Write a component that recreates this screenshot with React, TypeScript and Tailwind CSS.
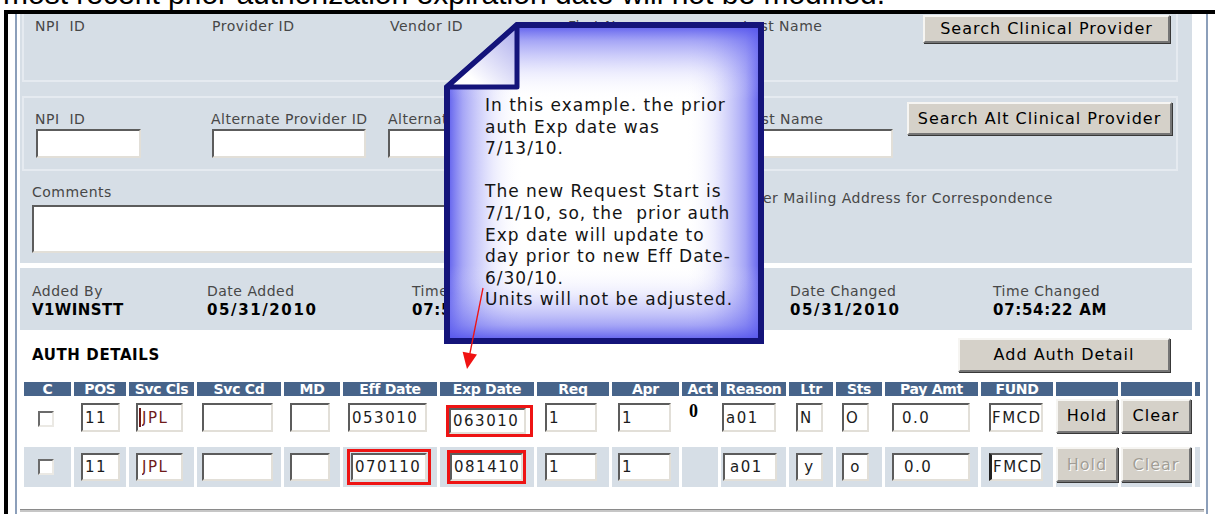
import type { ReactNode } from "react";

const sans = "font-['DejaVu_Sans',sans-serif]";
const labelText = `${sans} whitespace-pre text-[14px] leading-[17px] tracking-[0.5px] text-[#474747]`;
const sunken = "border-2 border-t-[#5c5c5c] border-l-[#5c5c5c] border-r-[#e2dfd8] border-b-[#e2dfd8] bg-white";
const raised = `${sans} border-2 border-t-[#f6f5f2] border-l-[#f6f5f2] border-r-[#757575] border-b-[#757575] bg-[#d5d1c9] text-[16px] tracking-[1px] shadow-[1px_1px_0_#383838]`;
const panelBg = "bg-[#d6dee6]";

const providerLabels = [
  { text: "NPI  ID", w: "w-[177px]" },
  { text: "Provider ID", w: "w-[178px]" },
  { text: "Vendor ID", w: "w-[178px]" },
  { text: "First Name", w: "w-[175px]" },
  { text: "Last Name", w: "w-[120px]" },
];

const altFields = [
  { text: "NPI  ID", w: "w-[176px]", input: "ml-px w-[105px]" },
  { text: "Alternate Provider ID", w: "w-[177px]", input: "ml-px w-[154px]" },
  { text: "Alternate Vendor ID", w: "w-[179px]", input: "w-[154px]" },
  { text: "Alt First Name", w: "w-[177px]", input: "w-[154px]" },
  { text: "Last Name", w: "w-[150px]", input: "ml-[3px] w-[146px]" },
];

const audit = [
  { label: "Added By", value: "V1WINSTT", w: "w-[175px]", track: "tracking-[0.4px]" },
  { label: "Date Added", value: "05/31/2010", w: "w-[205px]", track: "tracking-[1.6px]" },
  { label: "Time Added", value: "07:54:22 AM", w: "w-[188px]", track: "tracking-[0.7px]" },
  { label: "Changed By", value: "V1WINSTT", w: "w-[190px]", track: "tracking-[0.4px]" },
  { label: "Date Changed", value: "05/31/2010", w: "w-[203px]", track: "tracking-[1.6px]" },
  { label: "Time Changed", value: "07:54:22 AM", w: "w-[180px]", track: "tracking-[0.7px]" },
];

const columns = [
  { title: "C", w: "w-[47px]" },
  { title: "POS", w: "w-[52px]" },
  { title: "Svc Cls", w: "w-[65px]" },
  { title: "Svc Cd", w: "w-[84px]" },
  { title: "MD", w: "w-[56px]" },
  { title: "Eff Date", w: "w-[94px]" },
  { title: "Exp Date", w: "w-[94px]" },
  { title: "Req", w: "w-[72px]" },
  { title: "Apr", w: "w-[67px]" },
  { title: "Act", w: "w-[36px]" },
  { title: "Reason", w: "w-[65px]" },
  { title: "Ltr", w: "w-[44px]" },
  { title: "Sts", w: "w-[46px]" },
  { title: "Pay Amt", w: "w-[93px]" },
  { title: "FUND", w: "w-[72px]" },
  { title: "", w: "w-[62px]" },
  { title: "", w: "w-[71px]" },
  { title: "", w: "w-[5px]" },
];

const noteLines = [
  "In this example. the prior",
  "auth Exp date was",
  "7/13/10.",
  "",
  "The new Request Start is",
  "7/1/10, so, the  prior auth",
  "Exp date will update to",
  "day prior to new Eff Date-",
  "6/30/10.",
  "Units will not be adjusted.",
];

// edge tints of the note, each fading inward from one side
const noteEdges = [
  { id: "edgeLeft", x2: "1", y2: "0" },
  { id: "edgeRight", x1: "1", x2: "0", y2: "0" },
  { id: "edgeTop", x2: "0", y2: "1" },
  { id: "edgeBottom", y1: "1", x2: "0", y2: "0" },
];

function Field({
  value = "",
  w,
  h = "h-[29px]",
  extra = "pl-[2px]",
  tone = "text-[#1c1c1c]",
}: {
  value?: string;
  w: string;
  h?: string;
  extra?: string;
  tone?: string;
}) {
  return (
    <input
      readOnly
      value={value}
      className={`${sunken} ${w} ${h} ${extra} ${sans} text-[15px] tracking-[1.5px] ${tone} outline-none`}
    />
  );
}

function Check() {
  return (
    <span className="block h-[16px] w-[16px] border-2 border-t-[#6b6b6b] border-l-[#6b6b6b] border-r-[#ebe9e4] border-b-[#ebe9e4] bg-white" />
  );
}

function Flag({ className = "", children }: { className?: string; children: ReactNode }) {
  return <div className={`flex self-start border-[3px] border-[#ee1414] ${className}`}>{children}</div>;
}

function Cell({ w, className = "", children }: { w: string; className?: string; children?: ReactNode }) {
  return <div className={`flex shrink-0 ${w} ${className}`}>{children}</div>;
}

function ProviderPanel() {
  return (
    <div className={`${panelBg} pb-[10px]`}>
      <div className="ml-[2px] flex h-[68px] w-[1156px] justify-between border-x-2 border-b-2 border-[#e5eaf0] pl-[11px] pr-[4px]">
        <div className="flex pt-[4px]">
          {providerLabels.map((l) => (
            <span key={l.text} className={`${labelText} ${l.w}`}>
              {l.text}
            </span>
          ))}
        </div>
        <button className={`${raised} mr-[2px] mt-px h-[28px] w-[247px] text-black`}>Search Clinical Provider</button>
      </div>

      <div className="ml-[2px] mt-[14px] flex h-[75px] w-[1156px] justify-between border-2 border-[#e5eaf0] pl-[11px] pr-[4px]">
        <div className="flex pt-[13px]">
          {altFields.map((f) => (
            <div key={f.text} className={`flex flex-col ${f.w}`}>
              <span className={labelText}>{f.text}</span>
              <input readOnly className={`${sunken} mt-px h-[29px] ${f.input} outline-none`} />
            </div>
          ))}
        </div>
        <button className={`${raised} mt-[4px] h-[33px] w-[265px] text-black`}>Search Alt Clinical Provider</button>
      </div>

      <div className="mt-[13px] flex pl-[12px]">
        <div className="flex flex-col">
          <span className={labelText}>Comments</span>
          <textarea readOnly className={`${sunken} mt-[4px] block h-[48px] w-[610px] resize-none outline-none`} />
        </div>
        <label className="ml-[20px] mt-[6px] flex h-[17px] items-center gap-[6px]">
          <Check />
          <span className={labelText}>Use Provider Mailing Address for Correspondence</span>
        </label>
      </div>
    </div>
  );
}

function AuditPanel() {
  return (
    <div className={`${panelBg} mt-[5px] flex h-[62px] pl-[12px] pt-[15px]`}>
      {audit.map((a) => (
        <div key={a.label} className={`flex flex-col ${a.w}`}>
          <span className={labelText}>{a.label}</span>
          <span className={`${sans} mt-px whitespace-nowrap text-[15px] font-bold leading-[18px] ${a.track} text-black`}>
            {a.value}
          </span>
        </div>
      ))}
    </div>
  );
}

function AuthDetails() {
  const cellBg = "bg-[#d6dee6]";
  const off = "text-[#a29e96] [text-shadow:1px_1px_0_#ffffff]";

  return (
    <>
      <div className="mt-[8px] flex h-[34px] items-center justify-between pl-[12px] pr-[22px]">
        <span className={`${sans} text-[15px] font-bold tracking-[0.6px] text-black`}>AUTH DETAILS</span>
        <button className={`${raised} h-[34px] w-[212px] text-black`}>Add Auth Detail</button>
      </div>

      <div className="ml-[4px] mt-[10px] flex h-[14px] gap-[3px]">
        {columns.map((c, i) => (
          <div
            key={i}
            className={`flex shrink-0 items-center justify-center ${c.w} bg-[#47648a] ${sans} whitespace-nowrap text-[14px] font-bold tracking-[-0.3px] text-white`}
          >
            {c.title}
          </div>
        ))}
      </div>

      {/* first detail line: the prior auth */}
      <div className="ml-[4px] mt-[3px] flex h-[45px] items-start gap-[3px]">
        <Cell w="w-[47px]" className="pl-[14px] pt-[12px]">
          <Check />
        </Cell>
        <Cell w="w-[52px]" className="pl-[7px] pt-[4px]">
          <Field value="11" w="w-[39px]" />
        </Cell>
        <Cell w="w-[65px]" className="relative pl-[7px] pt-[4px]">
          <Field value="JPL" w="w-[47px]" extra="pl-[4px]" tone="text-[#6f1b1b]" />
          <span className="absolute left-[10px] top-[9px] h-[19px] w-[2px] bg-[#6f1b1b]" />
        </Cell>
        <Cell w="w-[84px]" className="pl-[5px] pt-[4px]">
          <Field w="w-[71px]" />
        </Cell>
        <Cell w="w-[56px]" className="pl-[6px] pt-[4px]">
          <Field w="w-[40px]" />
        </Cell>
        <Cell w="w-[94px]" className="pl-[5px] pt-[4px]">
          <Field value="053010" w="w-[79px]" />
        </Cell>
        <Cell w="w-[94px]" className="pl-[6px] pt-[6px]">
          <Flag className="pr-[4px]">
            <Field value="063010" w="w-[77px]" h="h-[26px]" />
          </Flag>
        </Cell>
        <Cell w="w-[72px]" className="pl-[8px] pt-[4px]">
          <Field value="1" w="w-[52px]" />
        </Cell>
        <Cell w="w-[67px]" className="pl-[6px] pt-[4px]">
          <Field value="1" w="w-[53px]" />
        </Cell>
        <Cell w="w-[36px]" className="pl-[7px] pt-[3px]">
          <span className="font-['Liberation_Serif',serif] text-[18px] font-bold leading-[18px] text-black">0</span>
        </Cell>
        <Cell w="w-[65px]" className="pl-px pt-[4px]">
          <Field value="a01" w="w-[54px]" />
        </Cell>
        <Cell w="w-[44px]" className="pl-[7px] pt-[4px]">
          <Field value="N" w="w-[27px]" />
        </Cell>
        <Cell w="w-[46px]" className="pl-[6px] pt-[4px]">
          <Field value="O" w="w-[27px]" />
        </Cell>
        <Cell w="w-[93px]" className="pl-[7px] pt-[4px]">
          <Field value="0.0" w="w-[78px]" extra="pl-[8px]" />
        </Cell>
        <Cell w="w-[72px]" className="pl-[8px] pt-[4px]">
          <Field value="FMCD" w="w-[54px]" extra="pl-px tracking-[0.5px]" />
        </Cell>
        <Cell w="w-[62px]">
          <button className={`${raised} h-[34px] w-full text-black`}>Hold</button>
        </Cell>
        <Cell w="w-[71px]">
          <button className={`${raised} h-[34px] w-[70px] text-black`}>Clear</button>
        </Cell>
        <Cell w="w-[5px]" />
      </div>

      {/* second detail line: the new request */}
      <div className="ml-[4px] mt-[3px] flex h-[40px] gap-[3px]">
        <Cell w="w-[47px]" className={`${cellBg} items-center pl-[14px]`}>
          <Check />
        </Cell>
        <Cell w="w-[52px]" className={`${cellBg} items-center pl-[7px]`}>
          <Field value="11" w="w-[39px]" h="h-[28px]" />
        </Cell>
        <Cell w="w-[65px]" className={`${cellBg} items-center pl-[7px]`}>
          <Field value="JPL" w="w-[47px]" h="h-[28px]" extra="pl-[4px]" tone="text-[#6f1b1b]" />
        </Cell>
        <Cell w="w-[84px]" className={`${cellBg} items-center pl-[5px]`}>
          <Field w="w-[71px]" h="h-[28px]" />
        </Cell>
        <Cell w="w-[56px]" className={`${cellBg} items-center pl-[6px]`}>
          <Field w="w-[40px]" h="h-[28px]" />
        </Cell>
        <Cell w="w-[94px]" className={`${cellBg} pl-[4px] pt-[2px]`}>
          <Flag className="p-px">
            <Field value="070110" w="w-[76px]" h="h-[28px]" />
          </Flag>
        </Cell>
        <Cell w="w-[94px]" className={`${cellBg} pl-[7px] pt-[3px]`}>
          <Flag>
            <Field value="081410" w="w-[73px]" h="h-[28px]" />
          </Flag>
        </Cell>
        <Cell w="w-[72px]" className={`${cellBg} items-center pl-[8px]`}>
          <Field value="1" w="w-[52px]" h="h-[28px]" />
        </Cell>
        <Cell w="w-[67px]" className={`${cellBg} items-center pl-[6px]`}>
          <Field value="1" w="w-[53px]" h="h-[28px]" />
        </Cell>
        <Cell w="w-[36px]" className={cellBg} />
        <Cell w="w-[65px]" className={`${cellBg} items-center pl-[2px]`}>
          <Field value="a01" w="w-[54px]" h="h-[28px]" extra="pl-[5px]" />
        </Cell>
        <Cell w="w-[44px]" className={`${cellBg} items-center pl-[7px]`}>
          <Field value="y" w="w-[27px]" h="h-[28px]" extra="pl-0 text-center" />
        </Cell>
        <Cell w="w-[46px]" className={`${cellBg} items-center pl-[6px]`}>
          <Field value="o" w="w-[27px]" h="h-[28px]" extra="pl-0 text-center" />
        </Cell>
        <Cell w="w-[93px]" className={`${cellBg} items-center pl-[7px]`}>
          <Field value="0.0" w="w-[78px]" h="h-[28px]" extra="pl-[10px]" />
        </Cell>
        <Cell w="w-[72px]" className={`${cellBg} items-center pl-[8px]`}>
          <Field value="FMCD" w="w-[54px]" h="h-[28px]" extra="border-l-[3px] border-l-[#222222] pl-px tracking-[0.5px]" />
        </Cell>
        <Cell w="w-[62px]" className={`${cellBg} items-start`}>
          <button disabled className={`${raised} h-[35px] w-full ${off}`}>
            Hold
          </button>
        </Cell>
        <Cell w="w-[71px]" className={`${cellBg} items-start`}>
          <button disabled className={`${raised} h-[35px] w-[70px] ${off}`}>
            Clear
          </button>
        </Cell>
        <Cell w="w-[5px]" className={cellBg} />
      </div>

      <div className="-mr-[12px] mt-[22px] h-[3px] border-t border-[#8a8a8a] bg-[#c6c6c6]" />
    </>
  );
}

function Callout() {
  const outline = "M73 3 H317 V319 H3 V65 Z";

  return (
    <div className="absolute left-[444px] top-[22px] h-[322px] w-[320px]">
      <svg width="320" height="322" viewBox="0 0 320 322" className="absolute inset-0">
        <defs>
          <clipPath id="noteClip">
            <path d={outline} />
          </clipPath>
          {noteEdges.map((e) => (
            <linearGradient key={e.id} id={e.id} x1={e.x1 ?? "0"} y1={e.y1 ?? "0"} x2={e.x2} y2={e.y2}>
              <stop offset="0" stopColor="#5252ec" stopOpacity="0.95" />
              <stop offset="0.05" stopColor="#6a6af0" stopOpacity="0.6" />
              <stop offset="0.15" stopColor="#9a9af6" stopOpacity="0.18" />
              <stop offset="0.24" stopColor="#ffffff" stopOpacity="0" />
            </linearGradient>
          ))}
          <linearGradient id="foldFill" x1="0" y1="1" x2="1" y2="0">
            <stop offset="0.25" stopColor="#ffffff" />
            <stop offset="1" stopColor="#a9a9ec" />
          </linearGradient>
        </defs>
        <g clipPath="url(#noteClip)">
          <rect x="3" y="3" width="314" height="316" fill="#ffffff" />
          {noteEdges.map((e) => (
            <rect key={e.id} x="3" y="3" width="314" height="316" fill={`url(#${e.id})`} />
          ))}
        </g>
        <path d={outline} fill="none" stroke="#14147a" strokeWidth="6" />
        <path d="M73 3 L3 65 H73 Z" fill="url(#foldFill)" stroke="#14147a" strokeWidth="5" strokeLinejoin="round" />
      </svg>
      <p className={`relative whitespace-pre pl-[41px] pt-[73px] ${sans} text-[17px] leading-[21.6px] tracking-[1px] text-[#141414]`}>
        {noteLines.join("\n")}
      </p>
    </div>
  );
}

function Pointer() {
  return (
    <svg className="absolute left-[455px] top-[283px]" width="35" height="90" viewBox="0 0 35 90">
      <line x1="28" y1="5" x2="14.8" y2="71" stroke="#f01212" strokeWidth="1.3" />
      <polygon points="7.6,68.8 22,71.6 12,86" fill="#f01212" />
    </svg>
  );
}

export default function App() {
  return (
    <div className="relative h-[514px] w-[1215px] overflow-hidden bg-white">
      <div className="h-[10px] overflow-hidden">
        <p className="-mt-[21px] whitespace-nowrap pl-[3px] font-['Liberation_Sans',Arial,sans-serif] text-[30px] leading-[30px] text-black">
          most recent prior authorization expiration date will not be modified.
        </p>
      </div>
      <div className="ml-[4px] h-[504px] border-l-4 border-t-4 border-black pl-[7px]">
        <div className="flex h-full w-[1193px] flex-col border-x-2 border-[#8c9fba] pl-[3px] pr-[14px]">
          <ProviderPanel />
          <AuditPanel />
          <AuthDetails />
        </div>
      </div>
      <Callout />
      <Pointer />
    </div>
  );
}
